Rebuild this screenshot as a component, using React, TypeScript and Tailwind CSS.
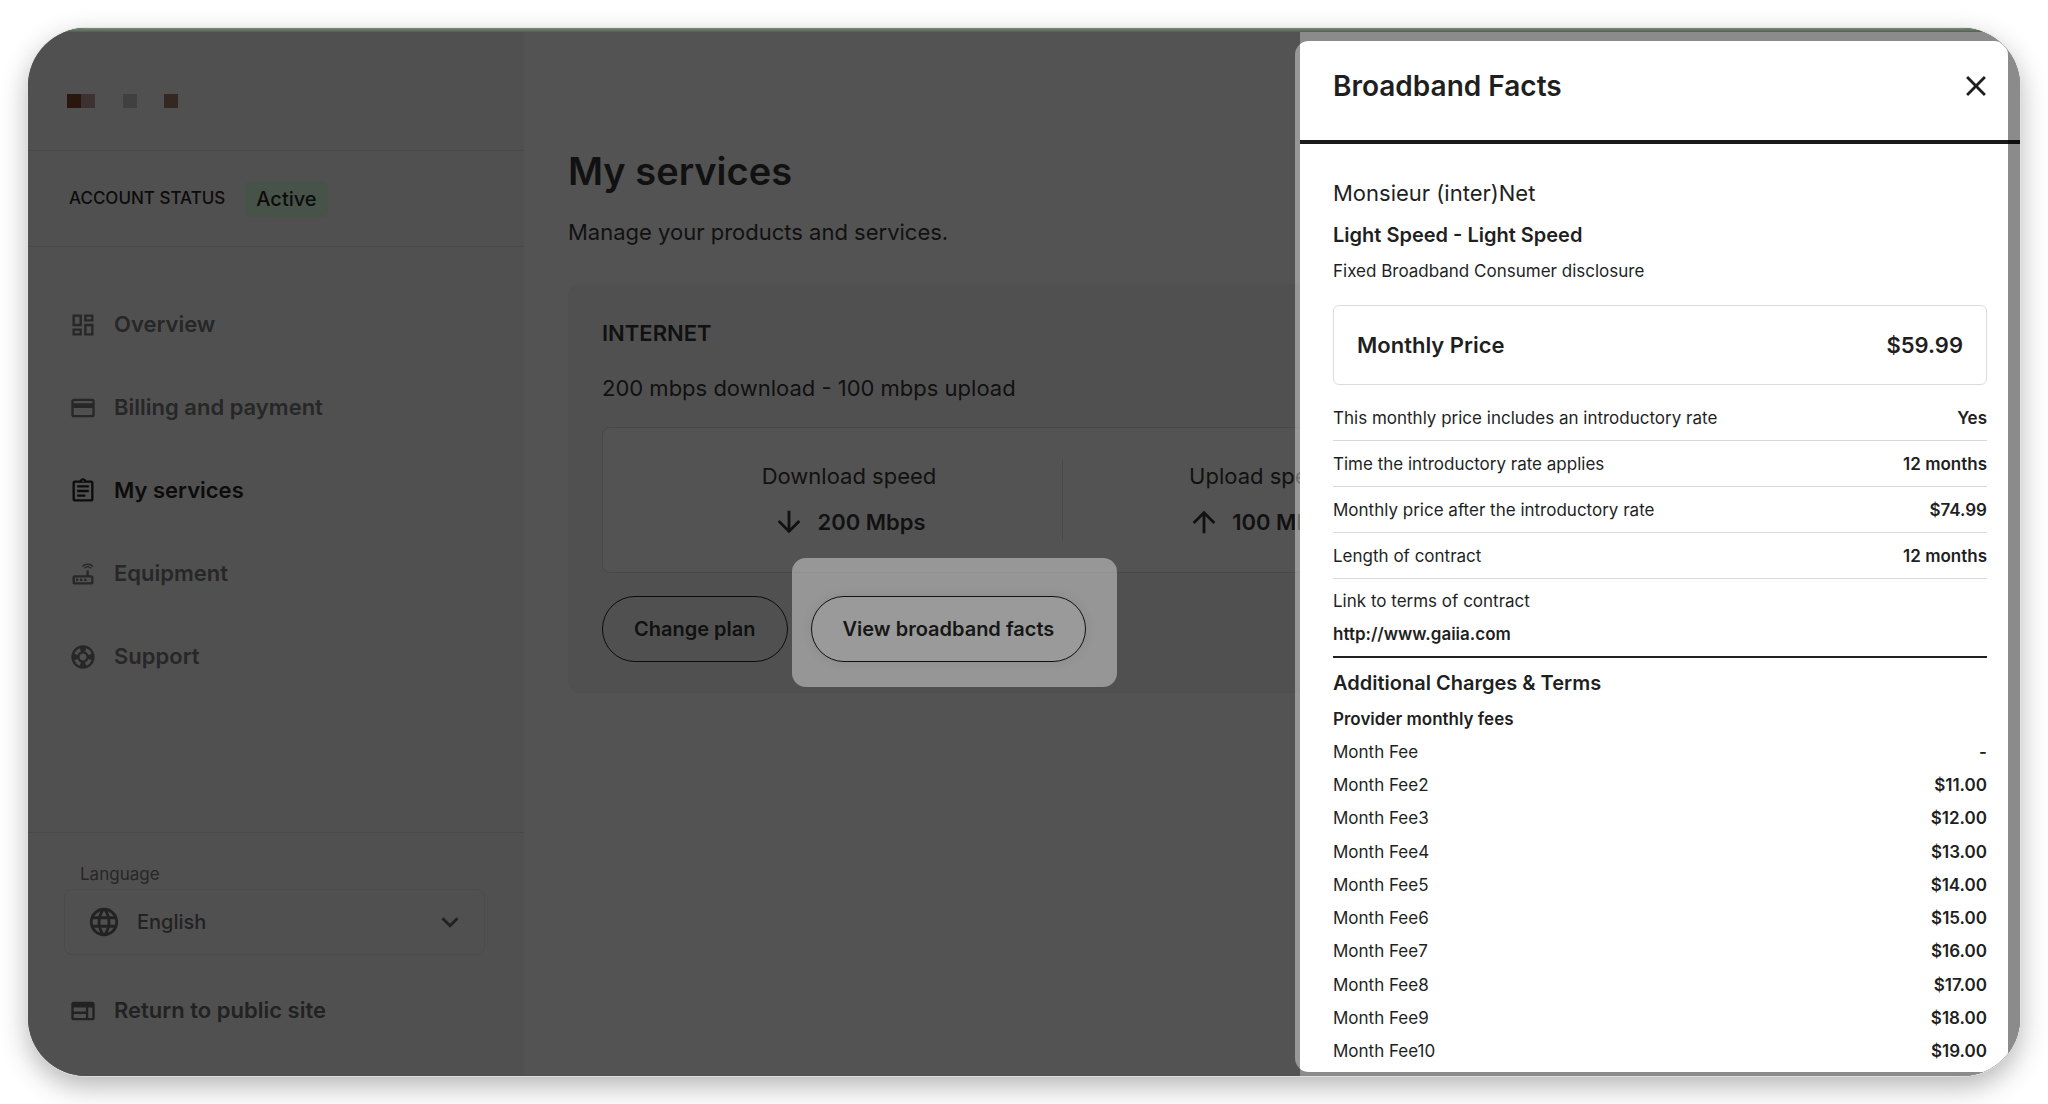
import type { IconType } from 'react-icons';
import {
  MdArrowDownward,
  MdArrowUpward,
  MdClose,
  MdExpandMore,
  MdLanguage,
  MdOutlineAssignment,
  MdOutlineDashboard,
  MdOutlineRouter,
  MdOutlineSupport,
  MdPayment,
} from 'react-icons/md';

type NavItem = { label: string; icon: IconType; active?: boolean };

const navItems: NavItem[] = [
  { label: 'Overview', icon: MdOutlineDashboard },
  { label: 'Billing and payment', icon: MdPayment },
  { label: 'My services', icon: MdOutlineAssignment, active: true },
  { label: 'Equipment', icon: MdOutlineRouter },
  { label: 'Support', icon: MdOutlineSupport },
];

const introRates = [
  ['This monthly price includes an introductory rate', 'Yes'],
  ['Time the introductory rate applies', '12 months'],
  ['Monthly price after the introductory rate', '$74.99'],
  ['Length of contract', '12 months'],
];

const monthlyFees = [
  ['Month Fee', '-'],
  ['Month Fee2', '$11.00'],
  ['Month Fee3', '$12.00'],
  ['Month Fee4', '$13.00'],
  ['Month Fee5', '$14.00'],
  ['Month Fee6', '$15.00'],
  ['Month Fee7', '$16.00'],
  ['Month Fee8', '$17.00'],
  ['Month Fee9', '$18.00'],
  ['Month Fee10', '$19.00'],
];

function Logo() {
  return (
    <svg width="112" height="14" viewBox="0 0 112 14" aria-hidden="true">
      <rect x="0" width="14" height="14" fill="#2a160f" />
      <rect x="14" width="14" height="14" fill="#3b3231" />
      <rect x="56" width="14" height="14" fill="#404040" />
      <rect x="97" width="14" height="14" fill="#352722" />
    </svg>
  );
}

function WebIcon() {
  return (
    <svg width="28" height="28" viewBox="0 0 24 24" fill="currentColor" aria-hidden="true">
      <path
        fillRule="evenodd"
        d="M20 4H4c-1.1 0-2 .9-2 2v12c0 1.1.9 2 2 2h16c1.1 0 2-.9 2-2V6c0-1.1-.9-2-2-2zM4 9h10.5v3.5H4V9zm0 5.5h10.5V18H4v-3.5zM20 18h-3.5V9H20v9z"
      />
    </svg>
  );
}

function Sidebar() {
  return (
    <aside className="flex w-[496px] shrink-0 flex-col bg-[#505050]">
      <div className="flex h-[123px] items-center border-b border-[#494949] pt-6 pl-[39px]">
        <Logo />
      </div>
      <div className="flex h-24 items-center gap-5 border-b border-[#494949] pl-[41px]">
        <span className="text-[17px] font-medium text-[#0c0c0c]">ACCOUNT STATUS</span>
        <span className="rounded-md bg-[#475249] px-[11px] py-1 text-xl leading-7 font-medium text-[#0c0c0c]">Active</span>
      </div>
      <nav className="flex flex-col pt-9 pl-[41px]">
        {navItems.map(({ label, icon: Icon, active }) => (
          <a
            key={label}
            href="#"
            className={`flex h-[83px] items-center gap-[17px] text-[22px] font-semibold ${active ? 'text-[#0c0c0c]' : 'text-[#272727]'}`}
          >
            <Icon size={28} />
            {label}
          </a>
        ))}
      </nav>
      <div className="mt-auto flex flex-col border-t border-[#494949] px-9 pt-7 pb-6">
        <label htmlFor="language" className="mb-[2px] pl-4 text-[17px] leading-[26px] text-[#272727]">
          Language
        </label>
        <div className="relative mr-[3px]">
          <select
            id="language"
            className="h-[66px] w-full appearance-none rounded-lg border border-[#4b4b4b] bg-transparent pl-[72px] text-xl font-medium text-[#222222]"
          >
            <option>English</option>
          </select>
          <MdLanguage size={34} className="pointer-events-none absolute top-4 left-[23px] text-[#222222]" />
          <MdExpandMore size={34} className="pointer-events-none absolute top-4 right-[18px] text-[#222222]" />
        </div>
        <a href="#" className="mt-[14px] flex h-[83px] items-center gap-[17px] pl-[5px] text-[22px] font-semibold text-[#222222]">
          <WebIcon />
          Return to public site
        </a>
      </div>
    </aside>
  );
}

function Speed({ label, value, icon: Icon }: { label: string; value: string; icon: IconType }) {
  return (
    <div className="flex flex-col items-center gap-3 text-[22px]">
      <span className="leading-8">{label}</span>
      <span className="flex h-9 items-center gap-[11px] font-semibold">
        <Icon size={34} />
        {value}
      </span>
    </div>
  );
}

function Services() {
  return (
    <main className="min-w-0 flex-1 bg-[#535353] px-11 pt-[115px] text-[#111111]">
      <h1 className="text-[38px] leading-[56px] font-semibold">My services</h1>
      <p className="mt-[17px] text-[22px] leading-8">Manage your products and services.</p>
      <section className="mt-9 flex max-w-[988px] flex-col gap-[23px] rounded-xl bg-[#505050] px-[34px] pt-[33px] pb-[31px] text-[22px] leading-8">
        <h2 className="font-semibold">INTERNET</h2>
        <p>200 mbps download - 100 mbps upload</p>
        <div className="grid grid-cols-2 rounded-lg border border-[#484848] bg-[#535353] px-[33px] py-8">
          <Speed label="Download speed" value="200 Mbps" icon={MdArrowDownward} />
          <div className="border-l border-[#484848] pr-7">
            <Speed label="Upload speed" value="100 Mbps" icon={MdArrowUpward} />
          </div>
        </div>
        <div className="flex gap-[23px] text-xl font-semibold">
          <button className="h-[66px] rounded-full border border-[#0c0c0c] px-[31px]">Change plan</button>
          <div className="relative">
            <div className="absolute -top-[38px] -right-[31px] -bottom-[25px] -left-[19px] rounded-[14px] bg-white/40" />
            <button className="relative h-[66px] rounded-full border border-[#111111] bg-[#9a9a9a] px-[31px] text-[#171717] shadow-[0_0_12px_rgba(0,0,0,0.08)]">
              View broadband facts
            </button>
          </div>
        </div>
      </section>
    </main>
  );
}

function BroadbandFacts() {
  return (
    <>
      {/* sliver of the highlight that falls on the page beside the drawer */}
      <div className="absolute top-[13px] right-3 bottom-1 w-[713px] rounded-[14px] bg-white/40" />
      <div
        role="dialog"
        aria-labelledby="facts-title"
        className="absolute top-1 right-0 bottom-0 flex w-[720px] flex-col overflow-hidden bg-white text-[17px] leading-6 text-[#1f1f1f]"
      >
        <header className="flex h-28 shrink-0 items-center justify-between border-b-4 border-[#1a1a1a] pr-[27px] pl-[33px]">
          <h2 id="facts-title" className="text-[28px] leading-10 font-semibold">
            Broadband Facts
          </h2>
          <button aria-label="Close">
            <MdClose size={34} />
          </button>
        </header>
        <div className="flex flex-col px-[33px] pt-[33px]">
          <p className="text-[22px] leading-8">Monsieur (inter)Net</p>
          <p className="mt-3 text-xl leading-7 font-semibold">Light Speed - Light Speed</p>
          <p className="mt-[10px]">Fixed Broadband Consumer disclosure</p>
          <div className="mt-[22px] flex h-20 items-center justify-between rounded-md border border-[#dcdcdc] px-[23px] text-[22px] font-semibold">
            <span>Monthly Price</span>
            <span>$59.99</span>
          </div>
          <table className="mt-[11px] h-[183px] w-full">
            <tbody>
              {introRates.map(([label, value]) => (
                <tr key={label} className="border-b border-[#d9d9d9]">
                  <th scope="row" className="text-left font-normal">
                    {label}
                  </th>
                  <td className="text-right font-semibold">{value}</td>
                </tr>
              ))}
            </tbody>
          </table>
          <div className="flex flex-col gap-[9px] border-b-2 border-[#1f1f1f] pt-[10px] pb-[10px]">
            <span>Link to terms of contract</span>
            <a href="http://www.gaiia.com" className="font-semibold">
              http://www.gaiia.com
            </a>
          </div>
          <h3 className="mt-[11px] text-xl leading-7 font-semibold">Additional Charges &amp; Terms</h3>
          <h4 className="mt-[10px] font-semibold">Provider monthly fees</h4>
          <table className="mt-1 h-[333px] w-full">
            <tbody>
              {monthlyFees.map(([label, value]) => (
                <tr key={label}>
                  <th scope="row" className="text-left font-normal">
                    {label}
                  </th>
                  <td className="text-right font-semibold">{value}</td>
                </tr>
              ))}
            </tbody>
          </table>
        </div>
        {/* dims everything in the drawer outside the highlight */}
        <div className="pointer-events-none absolute top-[9px] right-3 bottom-1 -left-[5px] rounded-[14px] shadow-[0_0_0_40px_rgba(0,0,0,0.455)]" />
      </div>
    </>
  );
}

export default function App() {
  return (
    <div className="flex min-h-screen bg-white p-7 font-['Inter',sans-serif]">
      <div className="relative flex w-full overflow-hidden rounded-[58px] bg-[#535353] shadow-[0_0_0_1px_rgba(225,225,225,0.8),0_10px_28px_rgba(0,0,0,0.3)]">
        <Sidebar />
        <Services />
        <BroadbandFacts />
        <div className="absolute inset-x-0 top-0 h-1 bg-linear-to-b from-[#7a8b7b] to-[#52614f]" />
      </div>
    </div>
  );
}
